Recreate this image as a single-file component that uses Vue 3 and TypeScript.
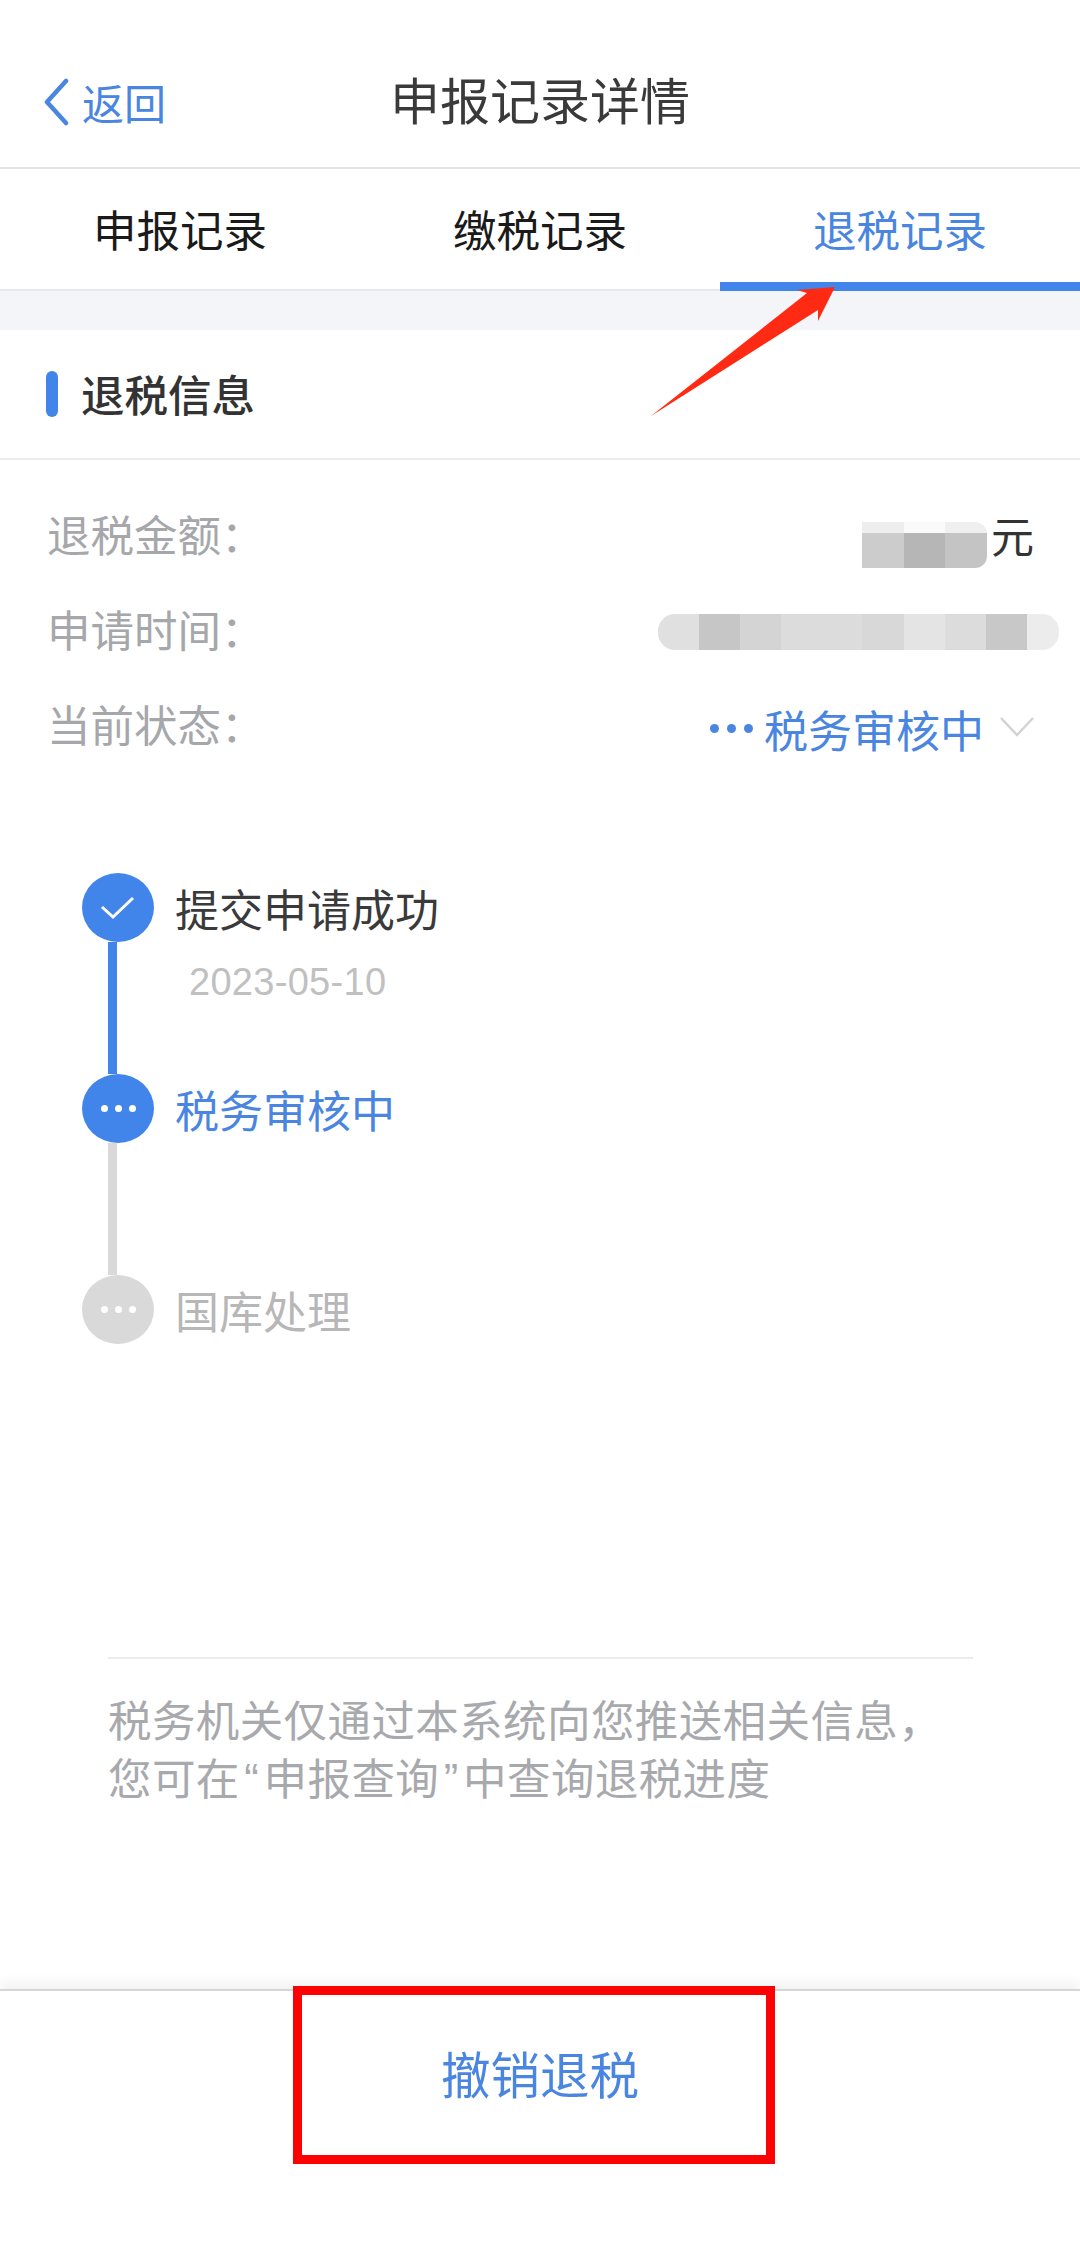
<script setup lang="ts">
import { ref } from 'vue'

type Step = {
  title: string
  date?: string
  state: 'done' | 'active' | 'waiting'
}

const tabs: string[] = ['申报记录', '缴税记录', '退税记录']
const activeTab = ref<number>(2)

const steps: Step[] = [
  { title: '提交申请成功', date: '2023-05-10', state: 'done' },
  { title: '税务审核中', state: 'active' },
  { title: '国库处理', state: 'waiting' },
]

// mosaic blocks covering the private values
const timeBlocks: { w: number; c: string }[] = [
  { w: 41, c: '#e0e0e0' },
  { w: 41, c: '#c6c6c6' },
  { w: 41, c: '#d4d4d4' },
  { w: 81, c: '#dcdcdc' },
  { w: 42, c: '#d8d8d8' },
  { w: 41, c: '#e4e4e4' },
  { w: 41, c: '#dcdcdc' },
  { w: 41, c: '#c8c8c8' },
  { w: 32, c: '#ececec' },
]
const amountBlocks: { c1: string; c2: string }[] = [
  { c1: '#eeeeee', c2: '#cccccc' },
  { c1: '#fafafa', c2: '#b6b6b6' },
  { c1: '#efefef', c2: '#c4c4c4' },
]
</script>

<template>
  <div class="page">
    <header class="nav">
      <div class="back">
        <svg class="back-icon" width="28" height="48" viewBox="0 0 28 48">
          <path d="M24 3 L5 24 L24 45" fill="none" stroke="#4a86e0" stroke-width="4.5" stroke-linecap="round" stroke-linejoin="round" />
        </svg>
        <span>返回</span>
      </div>
      <h1 class="nav-title">申报记录详情</h1>
    </header>

    <nav class="tabs">
      <div
        v-for="(tab, i) in tabs"
        :key="tab"
        class="tab"
        :class="{ active: i === activeTab }"
      >
        {{ tab }}
      </div>
    </nav>

    <div class="band"></div>

    <section class="section-head">
      <i class="mark"></i>
      <h2>退税信息</h2>
    </section>

    <section class="rows">
      <div class="row">
        <span class="label">退税金额：</span>
        <span class="value">
          <span class="mosaic-amount">
            <span v-for="(b, i) in amountBlocks" :key="i" class="amount-col">
              <i :style="{ background: b.c1 }"></i>
              <i :style="{ background: b.c2 }"></i>
            </span>
          </span>
          元
        </span>
      </div>
      <div class="row">
        <span class="label">申请时间：</span>
        <span class="mosaic-time">
          <i v-for="(b, i) in timeBlocks" :key="i" :style="{ width: b.w + 'px', background: b.c }"></i>
        </span>
      </div>
      <div class="row">
        <span class="label">当前状态：</span>
        <span class="status">
          <span class="status-dots"><i></i><i></i><i></i></span>
          <span>税务审核中</span>
          <svg width="36" height="22" viewBox="0 0 36 22">
            <path d="M2 2 L18 19 L34 2" fill="none" stroke="#d2d2d2" stroke-width="2.5" />
          </svg>
        </span>
      </div>
    </section>

    <section class="timeline">
      <div v-for="(step, i) in steps" :key="step.title" class="step" :class="step.state">
        <div class="rail">
          <div class="circle">
            <svg v-if="step.state === 'done'" width="36" height="26" viewBox="0 0 36 26">
              <path d="M2 12 L13 22 L33 3" fill="none" stroke="#fff" stroke-width="3" />
            </svg>
            <span v-else class="dots"><i></i><i></i><i></i></span>
          </div>
          <div v-if="i < steps.length - 1" class="line"></div>
        </div>
        <div class="step-text">
          <div class="step-title">{{ step.title }}</div>
          <div v-if="step.date" class="step-date">{{ step.date }}</div>
        </div>
      </div>
    </section>

    <section class="notice">
      <p>税务机关仅通过本系统向您推送相关信息，</p>
      <p>您可在<span class="quote">“</span>申报查询<span class="quote">”</span>中查询退税进度</p>
    </section>

    <footer class="footer">
      <button class="cancel">撤销退税</button>
      <div class="red-box"></div>
    </footer>

    <svg class="arrow" width="200" height="140" viewBox="640 280 200 140">
      <polygon points="651,416 807,293 797,290 835,287 818,321 818,310" fill="#ff2a14" />
    </svg>
  </div>
</template>

<style>
html,
body {
  margin: 0;
  background: #fff;
}
</style>

<style scoped>
.page {
  position: relative;
  width: 1080px;
  height: 2249px;
  display: flex;
  flex-direction: column;
  overflow: hidden;
  background: #fff;
  font-family: 'Noto Sans CJK SC', 'Liberation Sans', sans-serif;
  font-weight: 400;
  color: #333;
}

.nav {
  position: relative;
  height: 167px;
  flex: none;
  display: flex;
  align-items: center;
  justify-content: center;
  border-bottom: 2px solid #e4e4e6;
}

.back {
  position: absolute;
  left: 42px;
  top: 77px;
  display: flex;
  align-items: center;
  gap: 12px;
  font-size: 42px;
  line-height: 50px;
  color: #4a86e0;
}

.back-icon {
  flex: none;
}

.nav-title {
  margin: 0 0 30px 0;
  font-size: 50px;
  font-weight: 400;
  line-height: 60px;
  color: #3a3a3a;
  position: relative;
  top: 29px;
}

.tabs {
  height: 120px;
  flex: none;
  display: grid;
  grid-template-columns: repeat(3, 1fr);
  border-bottom: 2px solid #e8e8ea;
}

.tab {
  display: flex;
  align-items: flex-start;
  justify-content: center;
  padding-top: 29px;
  font-size: 43.5px;
  line-height: 62px;
  color: #1a1a1a;
}

.tab.active {
  color: #4a86e0;
  border-bottom: 9px solid #4285ea;
  margin-bottom: -2px;
}

.band {
  height: 39px;
  flex: none;
  background: #f4f5f9;
}

.section-head {
  height: 128px;
  flex: none;
  display: flex;
  align-items: center;
  gap: 23px;
  padding-left: 46px;
  border-bottom: 2px solid #ececec;
}

.section-head h2 {
  margin: 0;
  font-size: 43.5px;
  font-weight: 500;
  line-height: 60px;
  color: #333;
}

.mark {
  width: 12px;
  height: 46px;
  border-radius: 6px;
  background: #4285ea;
}

.rows {
  flex: none;
  padding: 26px 46px 4px 47px;
}

.row {
  height: 95px;
  display: flex;
  align-items: center;
  justify-content: space-between;
}

.label {
  font-size: 43.5px;
  line-height: 60px;
  color: #a6a7ab;
}

.value {
  display: flex;
  align-items: center;
  font-size: 43px;
  line-height: 60px;
  color: #333;
}

.mosaic-amount {
  display: flex;
  width: 125px;
  height: 46px;
  margin-right: 4px;
  margin-top: 22px;
  overflow: hidden;
  border-radius: 0 12px 12px 0;
}

.amount-col {
  flex: 1;
  display: flex;
  flex-direction: column;
}

.amount-col i:first-child {
  height: 11px;
}

.amount-col i:last-child {
  flex: 1;
}

.mosaic-time {
  display: flex;
  height: 36px;
  margin-top: 6px;
  margin-right: -25px;
  overflow: hidden;
  border-radius: 17px;
}

.status {
  display: flex;
  align-items: center;
  gap: 11px;
  margin-top: 10px;
  margin-right: -1px;
  font-size: 44px;
  line-height: 60px;
  color: #4a86e0;
}

.status svg {
  margin-left: 4px;
  margin-top: -4px;
}

.status-dots {
  display: flex;
  gap: 8px;
}

.status-dots i {
  width: 9px;
  height: 9px;
  border-radius: 50%;
  background: #4a86e0;
}

.timeline {
  flex: none;
  margin-top: 98px;
  padding-left: 82px;
}

.step {
  display: flex;
  height: 201px;
  gap: 21px;
}

.step:last-child {
  height: 70px;
}

.rail {
  width: 72px;
  flex: none;
}

.circle {
  width: 72px;
  height: 69px;
  border-radius: 50%;
  display: flex;
  align-items: center;
  justify-content: center;
  background: #4285ea;
}

.step.waiting .circle {
  background: #d9d9d9;
}

.line {
  width: 9px;
  height: 132px;
  margin-left: 26px;
  background: #4285ea;
}

.step.active .line {
  background: #d9d9d9;
}

.dots {
  display: flex;
  gap: 7px;
}

.dots i {
  width: 7px;
  height: 7px;
  border-radius: 50%;
  background: #fff;
}

.step-text {
  padding-top: 4px;
}

.step-title {
  font-size: 44px;
  line-height: 62px;
  color: #3a3a3a;
}

.step.active .step-title {
  color: #4a86e0;
}

.step.waiting .step-title {
  color: #b7b7b7;
}

.step-date {
  margin-top: 22px;
  padding-left: 14px;
  font-family: 'Liberation Sans', sans-serif;
  font-size: 38px;
  letter-spacing: 0.3px;
  line-height: 42px;
  color: #c0c0c0;
}

.notice {
  flex: none;
  margin: 312px 107px 0 108px;
  padding-top: 31px;
  border-top: 2px solid #ececec;
}

.notice p {
  margin: 0;
  font-size: 43.5px;
  letter-spacing: 0.4px;
  line-height: 58px;
  color: #a8a9ad;
  white-space: nowrap;
}

.quote {
  padding: 0 4.5px;
  font-family: 'Liberation Sans', sans-serif;
}

.footer {
  position: relative;
  margin-top: auto;
  height: 260px;
  flex: none;
  box-sizing: border-box;
  border-top: 2px solid #d6d6d6;
  box-shadow: 0 -6px 12px rgba(0, 0, 0, 0.06);
  background: #fff;
  display: flex;
  justify-content: center;
}

.cancel {
  height: 162px;
  padding: 0;
  border: 0;
  background: none;
  font-family: inherit;
  font-size: 49.5px;
  color: #4a86e0;
}

.red-box {
  position: absolute;
  left: 293px;
  top: -5px;
  width: 482px;
  height: 178px;
  box-sizing: border-box;
  border: 9px solid #fb0303;
}

.arrow {
  position: absolute;
  left: 640px;
  top: 280px;
}
</style>
